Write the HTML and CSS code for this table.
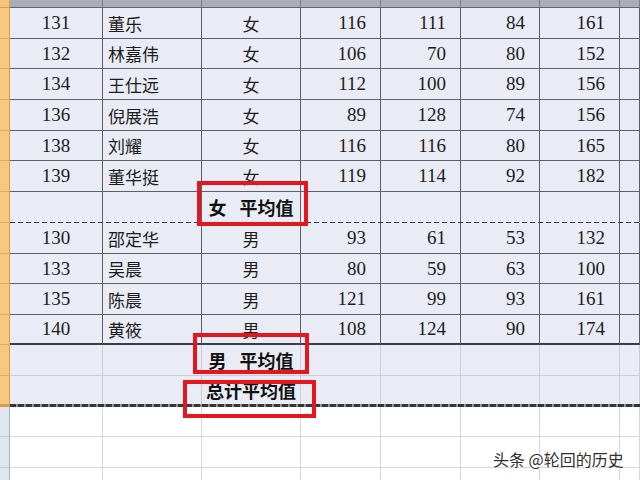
FILE: index.html
```html
<!DOCTYPE html>
<html lang="zh">
<head>
<meta charset="utf-8">
<link rel="stylesheet" href="styles.css">
</head>
<body>
<div class="sheet">
  <div class="row hdr">
    <div class="c rh"></div><div class="c"></div><div class="c"></div><div class="c"></div><div class="c"></div><div class="c"></div><div class="c"></div><div class="c"></div><div class="c"></div>
  </div>
  <div class="row h31">
    <div class="c rh"></div><div class="c n">131</div><div class="c t">董乐</div><div class="c g">女</div><div class="c v">116</div><div class="c v">111</div><div class="c v">84</div><div class="c v">161</div><div class="c"></div>
  </div>
  <div class="row h30">
    <div class="c rh"></div><div class="c n">132</div><div class="c t">林嘉伟</div><div class="c g">女</div><div class="c v">106</div><div class="c v">70</div><div class="c v">80</div><div class="c v">152</div><div class="c"></div>
  </div>
  <div class="row h31">
    <div class="c rh"></div><div class="c n">134</div><div class="c t">王仕远</div><div class="c g">女</div><div class="c v">112</div><div class="c v">100</div><div class="c v">89</div><div class="c v">156</div><div class="c"></div>
  </div>
  <div class="row h31">
    <div class="c rh"></div><div class="c n">136</div><div class="c t">倪展浩</div><div class="c g">女</div><div class="c v">89</div><div class="c v">128</div><div class="c v">74</div><div class="c v">156</div><div class="c"></div>
  </div>
  <div class="row h30">
    <div class="c rh"></div><div class="c n">138</div><div class="c t">刘耀</div><div class="c g">女</div><div class="c v">116</div><div class="c v">116</div><div class="c v">80</div><div class="c v">165</div><div class="c"></div>
  </div>
  <div class="row h31">
    <div class="c rh"></div><div class="c n">139</div><div class="c t">董华挺</div><div class="c g">女</div><div class="c v">119</div><div class="c v">114</div><div class="c v">92</div><div class="c v">182</div><div class="c"></div>
  </div>
  <div class="row h31 favg">
    <div class="c rh"></div><div class="c"></div><div class="c"></div><div class="c avg">女 平均值</div><div class="c"></div><div class="c"></div><div class="c"></div><div class="c"></div><div class="c"></div>
  </div>
  <div class="row h31">
    <div class="c rh"></div><div class="c n">130</div><div class="c t">邵定华</div><div class="c g">男</div><div class="c v">93</div><div class="c v">61</div><div class="c v">53</div><div class="c v">132</div><div class="c"></div>
  </div>
  <div class="row h30">
    <div class="c rh"></div><div class="c n">133</div><div class="c t">吴晨</div><div class="c g">男</div><div class="c v">80</div><div class="c v">59</div><div class="c v">63</div><div class="c v">100</div><div class="c"></div>
  </div>
  <div class="row h31">
    <div class="c rh"></div><div class="c n">135</div><div class="c t">陈晨</div><div class="c g">男</div><div class="c v">121</div><div class="c v">99</div><div class="c v">93</div><div class="c v">161</div><div class="c"></div>
  </div>
  <div class="row h30 last">
    <div class="c rh"></div><div class="c n">140</div><div class="c t">黄筱</div><div class="c g">男</div><div class="c v">108</div><div class="c v">124</div><div class="c v">90</div><div class="c v">174</div><div class="c"></div>
  </div>
  <div class="row h31 sum">
    <div class="c rh"></div><div class="c"></div><div class="c"></div><div class="c avg">男 平均值</div><div class="c"></div><div class="c"></div><div class="c"></div><div class="c"></div><div class="c"></div>
  </div>
  <div class="row h31 sum total">
    <div class="c rh"></div><div class="c"></div><div class="c"></div><div class="c avg">总计平均值</div><div class="c"></div><div class="c"></div><div class="c"></div><div class="c"></div><div class="c"></div>
  </div>
  <div class="row h30 blank">
    <div class="c rh"></div><div class="c"></div><div class="c"></div><div class="c"></div><div class="c"></div><div class="c"></div><div class="c"></div><div class="c"></div><div class="c"></div>
  </div>
  <div class="row h31 blank">
    <div class="c rh"></div><div class="c"></div><div class="c"></div><div class="c"></div><div class="c"></div><div class="c"></div><div class="c"></div><div class="c"></div><div class="c"></div>
  </div>
  <div class="row h31 blank">
    <div class="c rh"></div><div class="c"></div><div class="c"></div><div class="c"></div><div class="c"></div><div class="c"></div><div class="c"></div><div class="c"></div><div class="c"></div>
  </div>

  <div class="box b1"></div>
  <div class="box b2"></div>
  <div class="box b3"></div>
  <div class="wm">头条 @轮回的历史</div>
</div>
</body>
</html>
```

FILE: styles.css
```css
html, body {
  margin: 0;
  padding: 0;
  background: #ffffff;
}
body {
  width: 640px;
  height: 480px;
  overflow: hidden;
  font-family: "Liberation Serif", "Noto Sans CJK SC", serif;
}
.sheet {
  position: relative;
  width: 640px;
  height: 480px;
  overflow: hidden;
}
.row {
  display: grid;
  grid-template-columns: 10px 93px 99px 99px 80px 80px 79px 80px 1fr;
  box-sizing: border-box;
}
.hdr { height: 8px; }
.h30 { height: 30px; }
.h31 { height: 31px; }

.c {
  box-sizing: border-box;
  min-width: 0;
  display: flex;
  align-items: center;
  white-space: nowrap;
  background: #e9ecf4;
  border-right: 1px solid #5c6068;
  border-bottom: 1px solid #5c6068;
  font-size: 19px;
  color: #1c1c1c;
}
.rh {
  background: #f7c97f;
  border-right: 1px solid #d59c4a;
  border-bottom: 1px solid #e2ab5c;
}
.hdr .c {
  background: #a8adb6;
  border-right-color: #7b8089;
  border-bottom-color: #5f636b;
}
.hdr .rh {
  background: #f4c47a;
  border-right-color: #d59c4a;
  border-bottom-color: #d59c4a;
}
.n { justify-content: center; }
.t {
  padding-left: 5px;
  font-size: 17px;
  font-family: "Noto Sans CJK SC", sans-serif;
}
.g {
  justify-content: center;
  font-size: 17px;
  font-family: "Noto Sans CJK SC", sans-serif;
}
.v {
  justify-content: flex-end;
  padding-right: 14px;
}
.avg {
  justify-content: center;
  overflow: visible;
  font-family: "Noto Sans CJK SC", sans-serif;
  font-weight: 700;
  font-size: 18px;
  word-spacing: 9px;
  color: #111;
}

/* dashed line under the female average row */
.favg {
  padding-bottom: 1px;
  background: repeating-linear-gradient(90deg, #33363d 0 5px, #e9ecf4 5px 8px) 10px 100% / calc(100% - 10px) 1px no-repeat,
              linear-gradient(#e2ab5c, #e2ab5c) 0 100% / 10px 1px no-repeat;
}
.favg .c { border-bottom: none; }

/* thick line under last data row */
.last .c:not(.rh) { border-bottom: 2px solid #3a3d45; }

/* summary rows use light gridlines */
.sum .c:not(.rh) {
  border-right-color: #c7ccd6;
  border-bottom-color: #c7ccd6;
}
.total {
  padding-bottom: 3px;
  background: repeating-linear-gradient(90deg, #33363d 0 6px, #8d9099 6px 8px) 10px 100% / calc(100% - 10px) 3px no-repeat,
              linear-gradient(#d59c4a, #d59c4a) 0 100% / 10px 3px no-repeat;
}
.total .c { border-bottom: none; }

/* empty rows below the table */
.blank .c {
  background: #ffffff;
  border-right-color: #d3d8e0;
  border-bottom-color: #d3d8e0;
}
.blank .rh {
  background: #dfe6ef;
  border-right-color: #9fb3ca;
  border-bottom-color: #c1ccda;
}

/* red highlight boxes drawn over the sheet */
.box {
  position: absolute;
  box-sizing: border-box;
  border: 4px solid #e5171e;
}
.b1 { left: 197px; top: 181px; width: 111px; height: 45px; }
.b2 { left: 193px; top: 333px; width: 116px; height: 41px; }
.b3 { left: 183px; top: 380px; width: 133px; height: 38px; }

.wm {
  position: absolute;
  left: 493px;
  top: 448px;
  font-family: "Noto Sans CJK SC", sans-serif;
  font-size: 16px;
  line-height: 22px;
  color: #2f2f2f;
  text-shadow: 0 0 2px #ffffff, 0 0 2px #ffffff, 0 0 1px #ffffff;
}
```
